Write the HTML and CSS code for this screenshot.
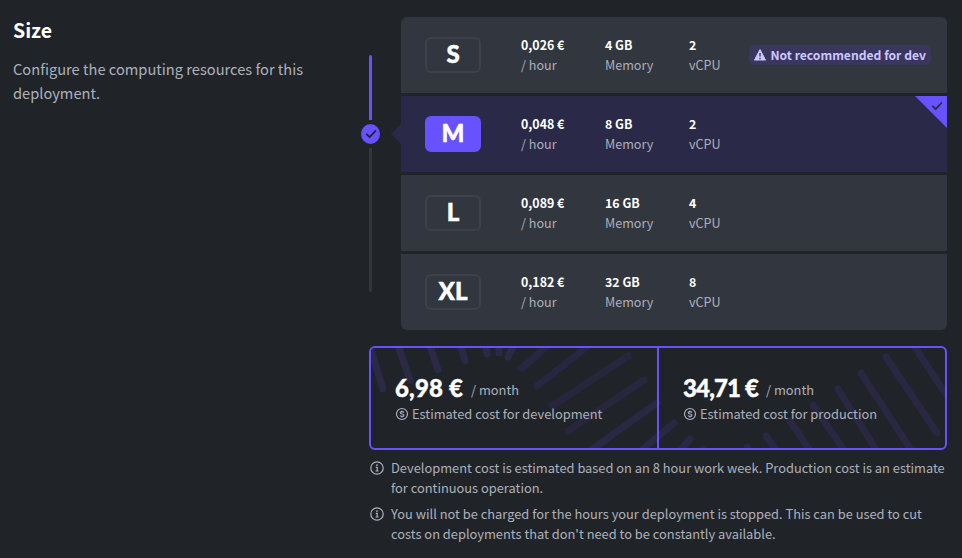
FILE: index.html
```html
<!DOCTYPE html>
<html lang="en">
<head>
<meta charset="utf-8">
<title>Size</title>
<link rel="stylesheet" href="styles.css">
</head>
<body>
<svg class="sprite" width="0" height="0" aria-hidden="true">
  <symbol id="check" viewBox="0 0 12 12"><path d="M1.8 6.4 4.6 9.2 10.4 3" fill="none" stroke="currentColor" stroke-width="1.8" stroke-linecap="round" stroke-linejoin="round"/></symbol>
  <symbol id="coin" viewBox="0 0 14 14"><g fill="none" stroke="currentColor" stroke-width="1.15"><circle cx="7" cy="7" r="5.5"/><path d="M8.9 5.6C8.6 4.4 5.2 4.3 5.2 5.8S8.9 6.8 8.9 8.3 5.3 9.6 5 8.3M7 3.5v1.2M7 9.3v1.2"/></g></symbol>
  <symbol id="info" viewBox="0 0 14 14"><circle cx="7" cy="7" r="6.2" fill="none" stroke="currentColor" stroke-width="1.2"/><path d="M5.8 6.3h1.4v3.6M5.6 10h3" fill="none" stroke="currentColor" stroke-width="1.2"/><circle cx="7" cy="4.1" r=".9" fill="currentColor"/></symbol>
</svg>
<main class="section">
  <header class="intro">
    <h2 class="title">Size</h2>
    <p class="lead">Configure the computing resources for this deployment.</p>
  </header>
  <div class="content">
    <div class="picker">
      <div class="slider">
        <span class="track track-on"></span>
        <span class="knob"><svg width="12" height="12"><use href="#check"/></svg></span>
        <span class="track track-off"></span>
      </div>
      <div class="sizes">
        <div class="size">
          <span class="label">S</span>
          <div class="spec"><b>0,026 €</b><span>/ hour</span></div>
          <div class="spec"><b>4 GB</b><span>Memory</span></div>
          <div class="spec last"><b>2</b><span>vCPU</span></div>
          <span class="badge"><svg width="12" height="12" viewBox="0 0 12 12"><path d="M6 .8 11.3 11H.7Z" fill="currentColor" stroke="currentColor" stroke-width="1.2" stroke-linejoin="round"/><path d="M6 4v3.4M6 8.7v1.5" stroke="#3a375f" stroke-width="1.4"/></svg><span class="badge-text">Not recommended for dev</span></span>
        </div>
        <div class="size selected">
          <span class="label">M</span>
          <div class="spec"><b>0,048 €</b><span>/ hour</span></div>
          <div class="spec"><b>8 GB</b><span>Memory</span></div>
          <div class="spec last"><b>2</b><span>vCPU</span></div>
          <span class="corner"><svg width="12" height="12"><use href="#check"/></svg></span>
        </div>
        <div class="size">
          <span class="label">L</span>
          <div class="spec"><b>0,089 €</b><span>/ hour</span></div>
          <div class="spec"><b>16 GB</b><span>Memory</span></div>
          <div class="spec last"><b>4</b><span>vCPU</span></div>
        </div>
        <div class="size">
          <span class="label">XL</span>
          <div class="spec"><b>0,182 €</b><span>/ hour</span></div>
          <div class="spec"><b>32 GB</b><span>Memory</span></div>
          <div class="spec last"><b>8</b><span>vCPU</span></div>
        </div>
      </div>
    </div>
    <div class="costs">
      <svg class="rays" viewBox="371 348 574 100" aria-hidden="true">
        <g fill="none" stroke="#2b2945" stroke-width="7" stroke-linecap="round">
          <path d="M368 340 383 389M396 340 410 380M428 340 438 370M459 340 465 361M484 335 487 354M499 330V353M519 335 508 357"/>
          <path d="M560 335 522 368M602 335 537 386" stroke="#282640"/>
          <path d="M628 356 552 406M644 380 568 431" stroke="#28263c"/>
          <path d="M657 403 584 455M674 423 630 460M690 439 672 460" stroke="#2a2843"/>
          <path d="M703 449 712 465M747 447 757 465M766 436 785 462M790 421 814 456M813 405 848 456M838 389 880 456M861 373 915 456M886 357 937 433M910 340 955 408" stroke="#292741"/>
        </g>
      </svg>
      <div class="cost">
        <div class="amount"><strong>6,98 €</strong><span class="per">/ month</span></div>
        <div class="hint"><svg width="14" height="14"><use href="#coin"/></svg><span>Estimated cost for development</span></div>
      </div>
      <div class="cost production">
        <div class="amount"><strong>34,71 €</strong><span class="per">/ month</span></div>
        <div class="hint"><svg width="14" height="14"><use href="#coin"/></svg><span>Estimated cost for production</span></div>
      </div>
    </div>
    <div class="note"><svg width="14" height="14"><use href="#info"/></svg><p>Development cost is estimated based on an 8 hour work week. Production cost is an estimate<br>for continuous operation.</p></div>
    <div class="note"><svg width="14" height="14"><use href="#info"/></svg><p>You will not be charged for the hours your deployment is stopped. This can be used to cut<br>costs on deployments that don't need to be constantly available.</p></div>
  </div>
</main>
</body>
</html>
```
FILE: styles.css
```css
* { box-sizing: border-box; }
body {
  margin: 0;
  height: 558px;
  overflow: hidden;
  background: #202428;
  color: #adb1bb;
  font: 12.85px/20px "Noto Sans CJK SC", sans-serif;
}
svg { display: block; flex: none; }
.sprite { position: absolute; }
h2, p { margin: 0; }
.section { display: grid; grid-template-columns: 348px 578px; padding: 17px 0 0 13px; column-gap: 8px; }
.title { color: #fff; font-size: 19.5px; line-height: 26px; font-weight: 700; }
.lead { width: 310px; margin-top: 14px; font-size: 14.65px; line-height: 24px; }
.picker { display: flex; gap: 21px; margin-left: -8px; }
.slider { width: 19px; height: 313px; padding-top: 38px; display: flex; flex-direction: column; align-items: center; }
.track { width: 3px; }
.track-on { height: 65px; background: #6851ff; border-radius: 2px 2px 0 0; }
.track-off { height: 144px; background: #32363f; border-radius: 0 0 2px 2px; }
.knob { width: 19px; height: 20px; margin: 4px 0; border-radius: 50%; background: #6851ff; color: #202428; display: flex; align-items: center; justify-content: center; }
.sizes { width: 546px; display: flex; flex-direction: column; gap: 3px; }
.size { position: relative; height: 76px; padding: 0 16px 0 24px; display: flex; align-items: center; background: #32363f; }
.size:first-child { border-radius: 6px 6px 0 0; }
.size:last-child { border-radius: 0 0 6px 6px; }
.selected { background: #2b2948; }
.selected::before { content: ""; position: absolute; left: -10px; top: 28px; width: 10px; height: 20px; background: #2b2948; clip-path: polygon(0 50%, 100% 0, 100% 100%); }
.label { flex: none; width: 56px; height: 36px; margin-right: 40px; border: 2px solid #3d4149; border-radius: 6px; color: #fff; font-family: Lato, sans-serif; font-size: 24px; font-weight: 900; line-height: 30px; text-align: center; -webkit-text-stroke: .5px #fff; }
.selected .label { background: #6851ff; border-color: #6851ff; }
.spec { flex: none; width: 84px; display: flex; flex-direction: column; white-space: nowrap; font-size: 12.6px; }
.spec.last { width: 40px; }
.spec b { color: #fff; font-size: 12.4px; }
.badge { margin-left: auto; height: 20px; padding: 0 5px; display: flex; align-items: center; gap: 4px; border-radius: 6px; background: #3a375f; color: #cdc6ff; font-size: 12.15px; font-weight: 700; white-space: nowrap; }
.corner { position: absolute; top: 0; right: 0; width: 32px; height: 32px; padding: 4px 0 0 16px; background: #6851ff; color: #2b2948; clip-path: polygon(0 0, 100% 0, 100% 100%); }
.costs { position: relative; width: 578px; height: 104px; margin: 16px 0 8px; display: flex; border: 2px solid #6851ff; border-radius: 6px; overflow: hidden; }
.rays { position: absolute; inset: 0; width: 574px; height: 100px; }
.cost { position: relative; width: 286px; padding: 24px 0 0 24px; }
.cost.production { width: 288px; border-left: 2px solid #6851ff; }
.amount { height: 32px; display: flex; align-items: center; gap: 8px; line-height: 32px; }
.amount strong { color: #fff; font-family: Lato, sans-serif; font-size: 24px; font-weight: 900; -webkit-text-stroke: .4px #fff; letter-spacing: .15px; }
.production strong { letter-spacing: -.85px; }
.per { margin-top: 3px; }
.hint { height: 20px; display: flex; align-items: center; gap: 3px; }
.note { display: flex; gap: 7px; padding-left: 1px; margin-bottom: 6px; white-space: nowrap; }
.note svg { margin-top: 3px; }
```
